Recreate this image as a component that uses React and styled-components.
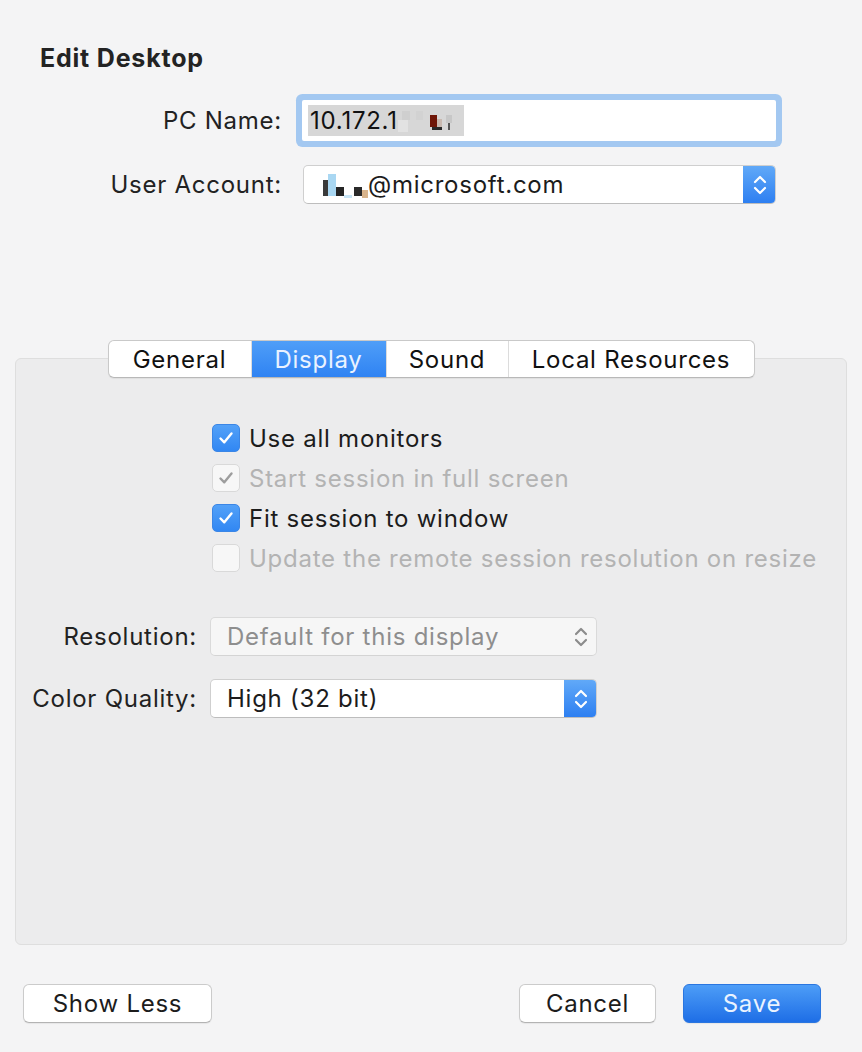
import React from "react";
import styled, { createGlobalStyle } from "styled-components";

const GlobalStyle = createGlobalStyle`
  html, body {
    margin: 0;
    padding: 0;
    background: #f4f4f5;
  }
  body {
    font-family: Inter, "Liberation Sans", Arial, sans-serif;
    color: #222;
    letter-spacing: 0.75px;
  }
  * { box-sizing: border-box; }
`;

const Window = styled.div`
  width: 862px;
  height: 1052px;
  display: flex;
  flex-direction: column;
  background: #f4f4f5;
`;

const Title = styled.h1`
  margin: 0;
  padding: 43px 0 0 40px;
  font-size: 25px;
  line-height: 30px;
  font-weight: 700;
  letter-spacing: 0.8px;
  color: #232323;
`;

const TopForm = styled.div`
  display: grid;
  grid-template-columns: 282px 474px;
  column-gap: 20px;
  row-gap: 24px;
  align-items: center;
  margin-top: 27px;
`;

const Label = styled.label`
  font-size: 24px;
  text-align: right;
  color: #222;
  white-space: nowrap;
`;

const TextInput = styled.div`
  height: 41px;
  background: #fff;
  border-radius: 2px;
  box-shadow: 0 0 0 6px #a3c8f1;
  display: flex;
  align-items: center;
  padding-left: 6px;
  font-size: 24px;
  color: #111;
`;

const Selection = styled.span`
  display: inline-flex;
  align-items: center;
  height: 31px;
  padding: 0 2px;
  background: #d7d7d7;
`;

const Select = styled.div`
  height: 39px;
  width: ${({ $w }) => $w || "473px"};
  margin-left: ${({ $shift }) => $shift || "0"};
  background: ${({ $disabled }) => ($disabled ? "#f6f6f6" : "#fff")};
  border: 1px solid ${({ $disabled }) => ($disabled ? "#dadada" : "#cfcfcf")};
  border-bottom-color: ${({ $disabled }) => ($disabled ? "#d4d4d4" : "#bdbdbd")};
  border-radius: 5px;
  display: flex;
  align-items: center;
  padding-left: 16px;
  font-size: 24px;
  color: ${({ $disabled }) => ($disabled ? "#8e8e8e" : "#1c1c1c")};
  overflow: hidden;
`;

const SelectText = styled.span`
  flex: 1;
  display: flex;
  align-items: center;
  white-space: nowrap;
`;

const Stepper = styled.div`
  width: 33px;
  align-self: stretch;
  margin: -1px -1px -1px 0;
  display: flex;
  align-items: center;
  justify-content: center;
  border-radius: 0 5px 5px 0;
  background: ${({ $disabled }) =>
    $disabled ? "transparent" : "linear-gradient(#62aaf8, #2c7ef1)"};
`;

const Panel = styled.div`
  margin: 154px 15px 0;
  height: 587px;
  background: #ececed;
  border: 1px solid #dedede;
  border-radius: 6px;
  display: flex;
  flex-direction: column;
  align-items: center;
`;

const TabBar = styled.div`
  margin-top: -19px;
  display: flex;
  height: 38px;
  background: #fff;
  border: 1px solid #c9c9c9;
  border-bottom-color: #b8b8b8;
  border-radius: 6px;
  box-shadow: 0 1px 1px rgba(0, 0, 0, 0.06);
  overflow: hidden;
`;

const Tab = styled.div`
  width: ${({ $w }) => $w}px;
  display: flex;
  align-items: center;
  justify-content: center;
  font-size: 24px;
  color: ${({ $active }) => ($active ? "#eaf2ff" : "#111")};
  background: ${({ $active }) =>
    $active ? "linear-gradient(#4f9ef8, #2f83f3)" : "transparent"};
  border-left: ${({ $first }) => ($first ? "none" : "1px solid #dcdcdc")};
`;

const Options = styled.div`
  align-self: flex-start;
  margin: 40px 0 0 196px;
  display: flex;
  flex-direction: column;
`;

const OptionRow = styled.div`
  height: 40px;
  display: flex;
  align-items: center;
  gap: 9px;
  font-size: 24px;
  color: ${({ $disabled }) => ($disabled ? "#b3b3b3" : "#1c1c1c")};
  white-space: nowrap;
`;

const Box = styled.span`
  width: 28px;
  height: 28px;
  border-radius: 5px;
  display: flex;
  align-items: center;
  justify-content: center;
  flex-shrink: 0;
  ${({ $checked, $disabled }) =>
    $checked && !$disabled
      ? "background: linear-gradient(#53a1f8, #3187f3); border: 1px solid #3b86e6;"
      : `background: #f7f7f7; border: 1px solid ${$disabled ? "#d9d9d9" : "#c4c4c4"};`}
`;

const BottomForm = styled.div`
  align-self: flex-start;
  margin-top: 39px;
  display: grid;
  grid-template-columns: 181px 387px;
  column-gap: 13px;
  row-gap: 23px;
  align-items: center;
`;

const Footer = styled.div`
  margin-top: 39px;
  display: flex;
  align-items: center;
  padding: 0 41px 0 23px;
`;

const Button = styled.button`
  height: 39px;
  width: ${({ $w }) => $w}px;
  margin-left: ${({ $ml }) => $ml || 0}px;
  border-radius: 6px;
  font-family: inherit;
  font-size: 24px;
  letter-spacing: 0.75px;
  cursor: pointer;
  ${({ $primary }) =>
    $primary
      ? "background: linear-gradient(#4d9df7, #1e6ee6); border: 1px solid #2a76e0; color: #eaf3ff;"
      : "background: #fff; border: 1px solid #cbcbcb; border-bottom-color: #b3b3b3; color: #1c1c1c;"}
  box-shadow: 0 1px 1px rgba(0, 0, 0, 0.06);
`;

const Spacer = styled.div`
  flex: 1;
`;

const Check = ({ color }) => (
  <svg width="18" height="18" viewBox="0 0 18 18">
    <path d="M3.5 9.5 L7.3 13.3 L14.5 4.5" fill="none" stroke={color} strokeWidth="2.4" strokeLinecap="round" strokeLinejoin="round" />
  </svg>
);

const Chevrons = ({ color }) => (
  <svg width="16" height="26" viewBox="0 0 16 26">
    <path d="M3 10 L8 5 L13 10" fill="none" stroke={color} strokeWidth="2.2" strokeLinecap="round" strokeLinejoin="round" />
    <path d="M3 16 L8 21 L13 16" fill="none" stroke={color} strokeWidth="2.2" strokeLinecap="round" strokeLinejoin="round" />
  </svg>
);

// pixelated redaction blocks, as in the screenshot
const RedactIp = () => (
  <svg width="64" height="28" viewBox="0 0 64 28">
    <rect x="4" y="4" width="8" height="9" fill="#cfcfcf" />
    <rect x="18" y="4" width="7" height="9" fill="#d2d2d2" />
    <rect x="0" y="13" width="10" height="12" fill="#e2e2e2" />
    <rect x="32" y="8" width="7" height="12" fill="#6f1608" />
    <rect x="39" y="12" width="5" height="8" fill="#c9b9b0" />
    <rect x="34" y="20" width="10" height="3" fill="#2a2a2a" />
    <rect x="48" y="8" width="6" height="8" fill="#c7c7c7" />
    <rect x="50" y="16" width="2" height="7" fill="#555" />
  </svg>
);

const RedactUser = () => (
  <svg width="48" height="28" viewBox="0 0 48 28">
    <rect x="3" y="9" width="9" height="16" fill="#3a3a3a" />
    <rect x="8" y="3" width="8" height="22" fill="#a9d7f2" />
    <rect x="16" y="16" width="8" height="9" fill="#252525" />
    <rect x="24" y="24" width="8" height="3" fill="#c9e6f7" />
    <rect x="34" y="16" width="8" height="9" fill="#2a2a2a" />
    <rect x="42" y="19" width="6" height="8" fill="#d8b48c" />
  </svg>
);

const tabs = [
  { name: "General", w: 142 },
  { name: "Display", w: 135, active: true },
  { name: "Sound", w: 122 },
  { name: "Local Resources", w: 246 },
];

const options = [
  { text: "Use all monitors", checked: true },
  { text: "Start session in full screen", checked: true, disabled: true },
  { text: "Fit session to window", checked: true },
  { text: "Update the remote session resolution on resize", disabled: true },
];

export default function App() {
  return (
    <Window>
      <GlobalStyle />
      <Title>Edit Desktop</Title>

      <TopForm>
        <Label>PC Name:</Label>
        <TextInput>
          <Selection>
            10.172.1
            <RedactIp />
          </Selection>
        </TextInput>
        <Label>User Account:</Label>
        <Select $shift="1px" $w="473px">
          <SelectText>
            <RedactUser />
            @microsoft.com
          </SelectText>
          <Stepper>
            <Chevrons color="#fff" />
          </Stepper>
        </Select>
      </TopForm>

      <Panel>
        <TabBar>
          {tabs.map((t, i) => (
            <Tab key={t.name} $w={t.w} $active={t.active} $first={i === 0}>
              {t.name}
            </Tab>
          ))}
        </TabBar>

        <Options>
          {options.map((o) => (
            <OptionRow key={o.text} $disabled={o.disabled}>
              <Box $checked={o.checked} $disabled={o.disabled}>
                {o.checked && <Check color={o.disabled ? "#9d9d9d" : "#fff"} />}
              </Box>
              {o.text}
            </OptionRow>
          ))}
        </Options>

        <BottomForm>
          <Label>Resolution:</Label>
          <Select $w="387px" $disabled>
            <SelectText>Default for this display</SelectText>
            <Stepper $disabled>
              <Chevrons color="#8c8c8c" />
            </Stepper>
          </Select>
          <Label>Color Quality:</Label>
          <Select $w="387px">
            <SelectText>High (32 bit)</SelectText>
            <Stepper>
              <Chevrons color="#fff" />
            </Stepper>
          </Select>
        </BottomForm>
      </Panel>

      <Footer>
        <Button $w={189}>Show Less</Button>
        <Spacer />
        <Button $w={137}>Cancel</Button>
        <Button $w={138} $ml={27} $primary>Save</Button>
      </Footer>
    </Window>
  );
}
